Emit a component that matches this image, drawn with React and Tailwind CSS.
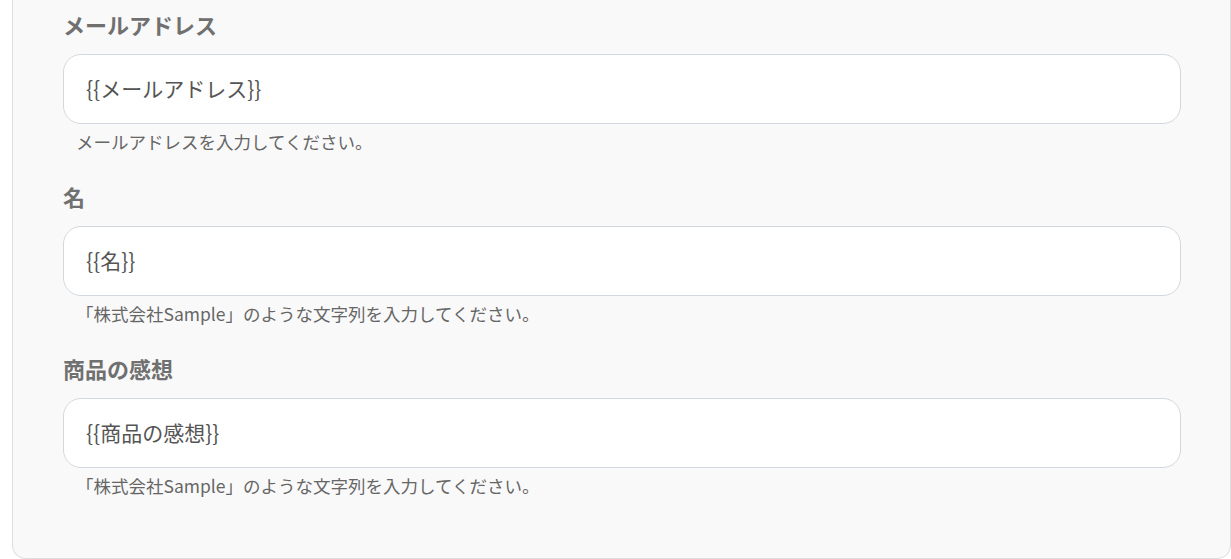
export default function App() {
  const fields = [
    { label: "メールアドレス", value: "{{メールアドレス}}", help: "メールアドレスを入力してください。" },
    { label: "名", value: "{{名}}", help: "「株式会社Sample」のような文字列を入力してください。" },
    { label: "商品の感想", value: "{{商品の感想}}", help: "「株式会社Sample」のような文字列を入力してください。" },
  ];
  return (
    <div className="bg-white w-[1231px] h-[559px] overflow-hidden" style={{ fontFamily: '"Noto Sans CJK JP", "Noto Sans", sans-serif' }}>
      <div className="ml-[12px] h-[559px] bg-[#f9f9f9] border border-t-0 border-[#dedede] rounded-b-[14px] pl-[50px] pr-[49px] pt-[12px] flex flex-col">
        {fields.map((f, i) => (
          <div key={i} className={i > 0 ? "mt-[30px]" : ""}>
            <div className="h-[28px] leading-[25px] text-[22px] font-bold text-[#707070]">{f.label}</div>
            <div className="mt-[14px] h-[70px] bg-white border border-[#d3d8df] rounded-[18px] flex items-center pl-[22px] text-[21px] text-[#555555]">
              {f.value}
            </div>
            <div className="mt-[6px] h-[24px] leading-[24px] pl-[13px] text-[17.5px] text-[#666666]">{f.help}</div>
          </div>
        ))}
      </div>
    </div>
  );
}
